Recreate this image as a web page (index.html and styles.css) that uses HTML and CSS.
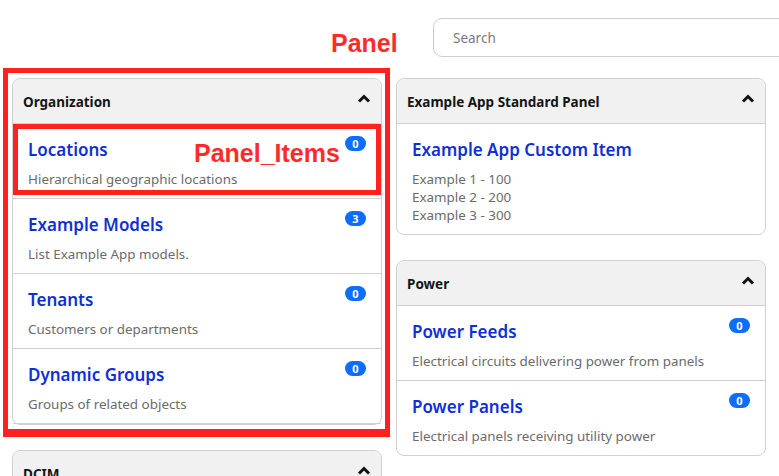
FILE: index.html
```html
<!DOCTYPE html>
<html>
<head>
<meta charset="utf-8">
<link rel="stylesheet" href="styles.css">
</head>
<body>
<div class="page">
  <div class="topbar">
    <span class="note note-panel">Panel</span>
    <input class="search" type="text" placeholder="Search">
  </div>
  <div class="columns">
    <div class="column col-left">
      <div class="card">
        <div class="card-head"><span>Organization</span><svg class="chev" viewBox="0 0 14 9"><polyline points="2,7.5 7,2.5 12,7.5"/></svg></div>
        <div class="item">
          <div class="item-text"><a class="item-title">Locations</a><div class="item-desc">Hierarchical geographic locations</div></div>
          <span class="badge">0</span>
        </div>
        <div class="item">
          <div class="item-text"><a class="item-title">Example Models</a><div class="item-desc">List Example App models.</div></div>
          <span class="badge">3</span>
        </div>
        <div class="item">
          <div class="item-text"><a class="item-title">Tenants</a><div class="item-desc">Customers or departments</div></div>
          <span class="badge">0</span>
        </div>
        <div class="item">
          <div class="item-text"><a class="item-title">Dynamic Groups</a><div class="item-desc">Groups of related objects</div></div>
          <span class="badge">0</span>
        </div>
        <div class="box box-items"></div>
        <span class="note note-items">Panel_Items</span>
      </div>
      <div class="box box-panel"></div>
      <div class="card">
        <div class="card-head"><span>DCIM</span><svg class="chev" viewBox="0 0 14 9"><polyline points="2,7.5 7,2.5 12,7.5"/></svg></div>
      </div>
    </div>
    <div class="column">
      <div class="card">
        <div class="card-head"><span>Example App Standard Panel</span><svg class="chev" viewBox="0 0 14 9"><polyline points="2,7.5 7,2.5 12,7.5"/></svg></div>
        <div class="item">
          <div class="item-text">
            <a class="item-title">Example App Custom Item</a>
            <div class="item-desc">Example 1 - 100</div>
            <div class="item-desc">Example 2 - 200</div>
            <div class="item-desc">Example 3 - 300</div>
          </div>
        </div>
      </div>
      <div class="card">
        <div class="card-head"><span>Power</span><svg class="chev" viewBox="0 0 14 9"><polyline points="2,7.5 7,2.5 12,7.5"/></svg></div>
        <div class="item">
          <div class="item-text"><a class="item-title">Power Feeds</a><div class="item-desc">Electrical circuits delivering power from panels</div></div>
          <span class="badge">0</span>
        </div>
        <div class="item">
          <div class="item-text"><a class="item-title">Power Panels</a><div class="item-desc">Electrical panels receiving utility power</div></div>
          <span class="badge">0</span>
        </div>
      </div>
    </div>
  </div>
</div>
</body>
</html>
```
FILE: styles.css
```css
html, body {
  margin: 0;
  padding: 0;
  overflow: hidden;
  background: #ffffff;
}
body {
  font-family: "Noto Sans", "Open Sans", sans-serif;
  color: #222;
}
.page {
  position: relative;
  padding: 18px 0 0 12px;
  width: 900px;
}
.topbar {
  display: flex;
  height: 39px;
  margin-bottom: 21px;
}
.search {
  margin-left: 421px;
  width: 380px;
  height: 39px;
  box-sizing: border-box;
  border: 1px solid #cdcdcd;
  border-radius: 9px;
  padding: 0 0 0 19px;
  font-family: inherit;
  font-size: 13.5px;
  color: #333;
  outline: none;
}
.search::placeholder {
  color: #7a7a7a;
}
.columns {
  display: grid;
  grid-template-columns: 370px 370px;
  column-gap: 14px;
  align-items: start;
}
.column {
  position: relative;
  display: flex;
  flex-direction: column;
  gap: 25px;
}
.card {
  position: relative;
  border: 1px solid #d0d0d0;
  border-radius: 8px;
  background: #fff;
}
.card-head {
  display: flex;
  align-items: center;
  justify-content: space-between;
  height: 45px;
  box-sizing: border-box;
  padding: 0 10px 0 10px;
  background: #f1f1f1;
  border-radius: 8px 8px 0 0;
  border-bottom: 1px solid #d0d0d0;
  font-size: 13.5px;
  font-weight: 700;
  color: #151515;
}
.card-head span {
  margin-top: 1px;
}
.chev {
  width: 14px;
  height: 9px;
  margin-top: -6px;
  fill: none;
  stroke: #111;
  stroke-width: 3;
  stroke-linejoin: miter;
  stroke-linecap: butt;
}
.item {
  display: flex;
  justify-content: space-between;
  align-items: flex-start;
  padding: 14px 15px 10px 15px;
  border-bottom: 1px solid #d0d0d0;
}
.item:last-child {
  border-bottom: none;
}
.item-text {
  display: flex;
  flex-direction: column;
}
.item-title {
  font-size: 17px;
  font-weight: 600;
  line-height: 24px;
  color: #0f30d6;
  margin-bottom: 8px;
  cursor: pointer;
}
.item-desc {
  font-size: 13.4px;
  line-height: 18px;
  color: #6b6b6b;
}
.badge {
  display: inline-flex;
  align-items: center;
  justify-content: center;
  min-width: 21px;
  height: 15px;
  margin-top: -2px;
  border-radius: 8px;
  background: #0d6efd;
  color: #fff;
  font-size: 11px;
  font-weight: 700;
  line-height: 1;
  box-sizing: border-box;
}
.note {
  position: absolute;
  font-family: "Liberation Sans", Arial, sans-serif;
  font-weight: 700;
  font-size: 25px;
  line-height: 1;
  color: #ff2b2b;
  white-space: nowrap;
}
.note-panel {
  left: 331px;
  top: 31px;
}
.note-items {
  left: 181px;
  top: 62px;
}
.box {
  position: absolute;
  border: 5px solid #ff2020;
  box-sizing: border-box;
  pointer-events: none;
}
.box-panel {
  left: -9px;
  top: -10px;
  width: 387px;
  height: 369px;
  border-bottom-width: 8px;
}
.box-items {
  left: 0px;
  top: 45px;
  width: 368px;
  height: 71px;
}
```
